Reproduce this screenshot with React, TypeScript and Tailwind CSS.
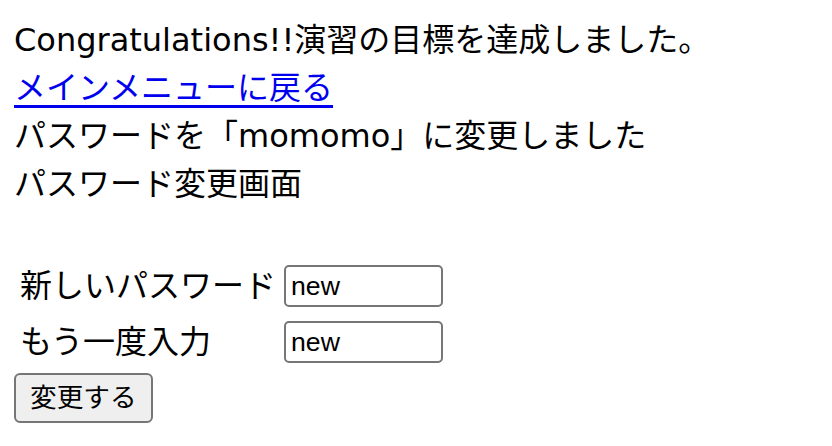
export default function App() {
  return (
    <div
      className="min-h-screen bg-white px-[14px] py-[16px] text-[32px] leading-[48px] text-black"
      style={{ fontFamily: '"DejaVu Sans", "Noto Sans CJK JP", sans-serif' }}
    >
      <div>Congratulations!!演習の目標を達成しました。</div>
      <div>
        <a href="#" className="text-[#0000ee] underline underline-offset-[6px] decoration-[3px]">
          メインメニューに戻る
        </a>
      </div>
      <div>パスワードを「momomo」に変更しました</div>
      <div>パスワード変更画面</div>
      <div className="h-[48px]" />
      <form onSubmit={(e) => e.preventDefault()}>
        <table className="border-separate border-spacing-[4px]">
          <tbody>
            <tr>
              <td className="p-[2px]">新しいパスワード</td>
              <td className="p-[2px] align-middle">
                <input
                  type="text"
                  value="new"
                  readOnly
                  className="block h-[42px] w-[159px] rounded-[5px] border-2 border-[#767676] bg-white px-[5px] text-[26.67px] outline-none"
                  style={{ fontFamily: '"Liberation Sans", sans-serif' }}
                />
              </td>
            </tr>
            <tr>
              <td className="p-[2px]">もう一度入力</td>
              <td className="p-[2px] align-middle">
                <input
                  type="text"
                  value="new"
                  readOnly
                  className="block h-[42px] w-[159px] rounded-[5px] border-2 border-[#767676] bg-white px-[5px] text-[26.67px] outline-none"
                  style={{ fontFamily: '"Liberation Sans", sans-serif' }}
                />
              </td>
            </tr>
          </tbody>
        </table>
        <button
          type="submit"
          className="h-[50px] rounded-[6px] border-2 border-[#767676] bg-[#efefef] px-[14px] text-[26.67px] leading-[40px]"
        >
          変更する
        </button>
      </form>
    </div>
  );
}
